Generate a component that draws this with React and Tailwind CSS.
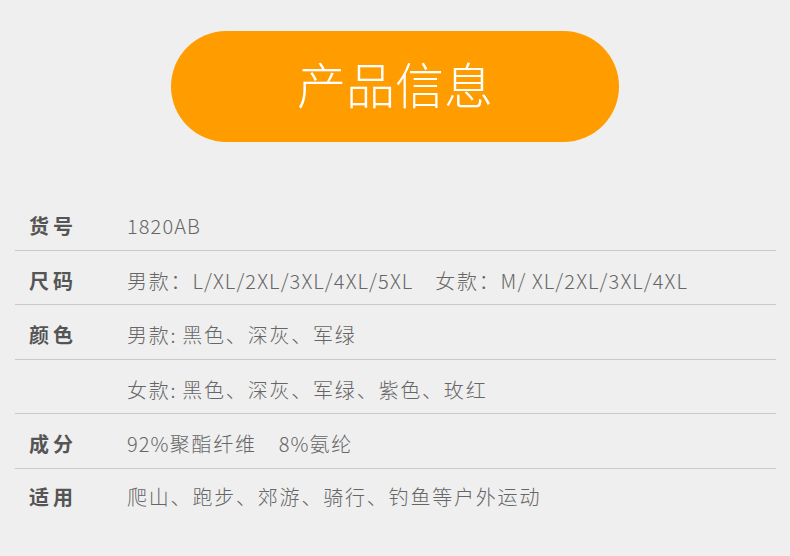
const rows = [
  { label: '货号', value: '1820AB' },
  { label: '尺码', value: '男款：L/XL/2XL/3XL/4XL/5XL\u3000女款：M/ XL/2XL/3XL/4XL' },
  { label: '颜色', value: '男款: 黑色、深灰、军绿' },
  { label: '', value: '女款: 黑色、深灰、军绿、紫色、玫红' },
  { label: '成分', value: '92%聚酯纤维\u30008%氨纶' },
  { label: '适用', value: '爬山、跑步、郊游、骑行、钓鱼等户外运动' },
];

// CJK glyphs and latin glyphs get their own letter spacing
const splitRuns = (text) => text.match(/[\u3000-\u9fff\uff00-\uffef]+|[^\u3000-\u9fff\uff00-\uffef]+/g);
const isCjk = (s) => /[\u3000-\u9fff\uff00-\uffef]/.test(s);

export default function App() {
  return (
    <div
      className="w-[790px] h-[556px] bg-[#efefef] overflow-hidden"
      style={{ fontFamily: '"Noto Sans CJK SC", "Noto Sans", sans-serif' }}
    >
      {/* header pill */}
      <div className="flex justify-center pt-[31px]">
        <div className="w-[448px] h-[111px] rounded-full bg-[#ff9c00] flex items-center justify-center pb-[9px]">
          <span className="text-white text-[49px] font-light leading-none">产品信息</span>
        </div>
      </div>

      {/* spec table */}
      <div className="mt-[54px] pl-[15px] pr-[14px]">
        {rows.map((row, i) => (
          <div
            key={i}
            className={`flex items-center h-[54.5px] pl-[14px] ${
              i < rows.length - 1 ? 'border-b border-[#c9c9c9] pt-[7px]' : 'pt-[3px]'
            }`}
          >
            <div className="w-[98px] shrink-0 text-[20px] font-bold text-[#555555] tracking-[4px] leading-none">
              {row.label}
            </div>
            <div className="text-[20px] font-light text-[#666666] whitespace-nowrap leading-none">
              {splitRuns(row.value).map((run, j) => (
                <span key={j} className={isCjk(run) ? 'tracking-[1.8px]' : 'tracking-[1.1px]'}>
                  {run}
                </span>
              ))}
            </div>
          </div>
        ))}
      </div>
    </div>
  );
}
